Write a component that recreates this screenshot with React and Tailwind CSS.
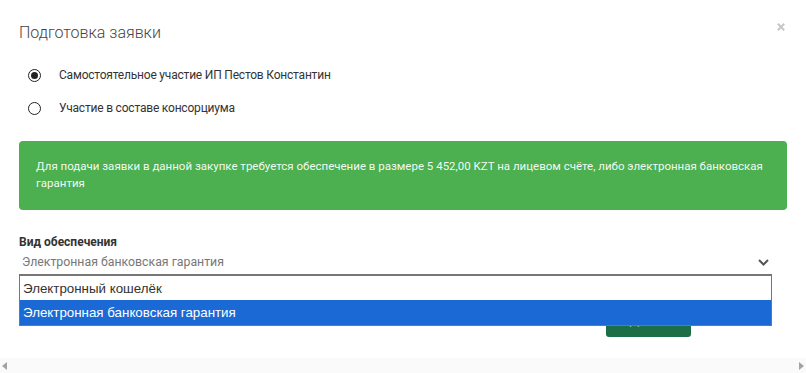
import React from "react";

function Radio({ checked }) {
  return (
    <span className="flex h-[13px] w-[13px] items-center justify-center rounded-full border border-[#222] bg-white">
      {checked && <span className="h-[7px] w-[7px] rounded-full bg-[#222]" />}
    </span>
  );
}

export default function App() {
  return (
    <div
      className="relative flex h-[373px] w-[806px] flex-col overflow-hidden bg-white"
      style={{ fontFamily: "Roboto, 'Noto Sans', sans-serif" }}
    >
      <button className="absolute left-[777px] top-[23px] h-[8px] w-[8px]" aria-label="Закрыть">
        <svg width="8" height="8" viewBox="0 0 8 8" className="block">
          <path d="M0.8 0.8 L7.2 7.2 M7.2 0.8 L0.8 7.2" stroke="#c6c6c6" strokeWidth="2" />
        </svg>
      </button>

      <div className="px-[19px] pt-[22px]">
        <h2 className="text-[16px] font-light leading-[22px] text-[#444]">Подготовка заявки</h2>

        <div className="mt-[21px] flex flex-col gap-[13px] pl-[9px]">
          <label className="flex h-[20px] items-center gap-[18px] text-[12px] tracking-[-0.2px] text-[#333]">
            <Radio checked />
            <span>Самостоятельное участие ИП Пестов Константин</span>
          </label>
          <label className="flex h-[20px] items-center gap-[18px] text-[12px] tracking-[-0.2px] text-[#333]">
            <Radio />
            <span>Участие в составе консорциума</span>
          </label>
        </div>

        <div className="mt-[23px] h-[69px] rounded-[4px] bg-[#4caf50] px-[17px] pt-[17px] text-[11.5px] leading-[17px] text-white/95">
          Для подачи заявки в данной закупке требуется обеспечение в размере 5 452,00 KZT на лицевом счёте, либо электронная банковская гарантия
        </div>

        <div className="mt-[24px] text-[12px] font-bold leading-[16px] text-[#333]">Вид обеспечения</div>

        <div className="relative w-[753px]">
          <div className="flex h-[25px] items-center justify-between border-b border-[#777] pl-[3px] pr-[3px] text-[12.3px] text-[#777]">
            <span>Электронная банковская гарантия</span>
            <svg width="11" height="7" viewBox="0 0 11 7">
              <path d="M1 1 L5.5 5.5 L10 1" fill="none" stroke="#555" strokeWidth="2" />
            </svg>
          </div>

          <div
            className="absolute left-0 top-full z-10 w-full border border-[#767676] bg-white text-[13.33px]"
            style={{ fontFamily: "'Liberation Sans', Arial, sans-serif" }}
          >
            <div className="flex h-[24px] items-center px-[3px] pt-[2px] text-[#333]">Электронный кошелёк</div>
            <div className="flex h-[25px] items-center bg-[#1a69d4] px-[3px] pt-[1px] text-white">
              Электронная банковская гарантия
            </div>
          </div>
        </div>

        <div className="mt-[28px] flex justify-end pr-[96px]">
          <button className="h-[34px] w-[85px] rounded-[3px] bg-[#1b6e45] text-[13px] text-white">Далее</button>
        </div>
      </div>

      <div className="mt-auto flex h-[15px] items-center justify-between bg-[#fafafa] px-[2px]">
        <svg width="5" height="8" viewBox="0 0 5 8">
          <path d="M5 0 L0 4 L5 8 Z" fill="#a3a3a3" />
        </svg>
        <svg width="5" height="8" viewBox="0 0 5 8">
          <path d="M0 0 L5 4 L0 8 Z" fill="#a3a3a3" />
        </svg>
      </div>
    </div>
  );
}
